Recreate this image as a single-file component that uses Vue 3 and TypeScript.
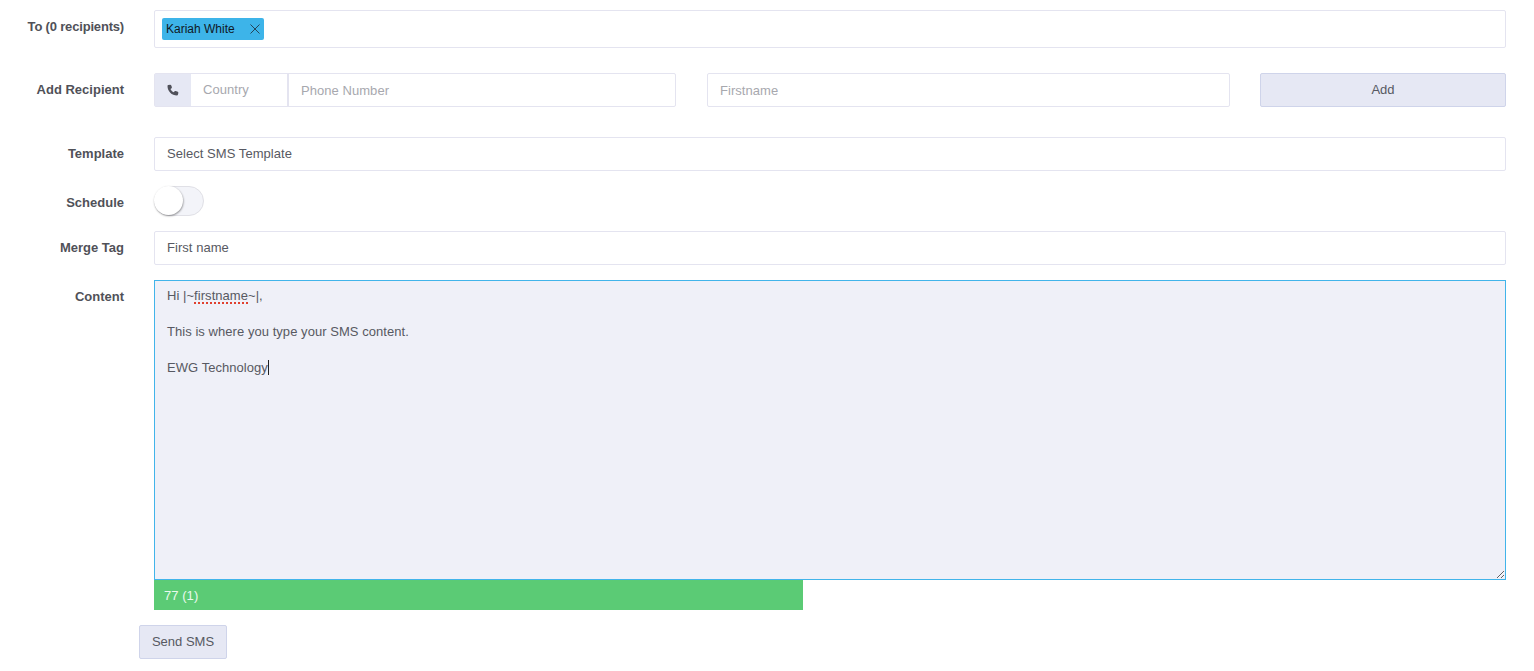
<script setup lang="ts">
const count = 77
const parts = 1
</script>

<template>
  <form class="page" @submit.prevent>
    <div class="row to-row">
      <label class="label to-label">To (0 recipients)</label>
      <div class="field tags">
        <span class="tag">
          <span>Kariah White</span>
          <svg class="tag-x" width="10" height="10" viewBox="0 0 10 10" aria-hidden="true">
            <path d="M.5.5l9 9M9.500.5l-9 9" fill="none" stroke="#1f2a33" stroke-width=".8" />
          </svg>
        </span>
      </div>
    </div>

    <div class="row add-row">
      <label class="label">Add Recipient</label>
      <div class="add-grid">
        <div class="phone-group">
          <span class="addon">
            <svg width="12" height="12" viewBox="0 0 24 24" aria-hidden="true">
              <path fill="#50515a" d="M6.200 1.300 2.400 2.200C1.600 2.400 1 3.100 1 4c0 10.500 8.500 19 19 19 .9 0 1.600-.6 1.800-1.400l.9-3.800c.2-.9-.3-1.800-1.100-2.100l-4.200-1.800c-.7-.3-1.600-.1-2.100.5l-1.800 2.300c-2.900-1.400-5.200-3.700-6.600-6.600l2.300-1.800c.6-.5.8-1.400.5-2.100L8.300 2.400c-.4-.8-1.200-1.300-2.100-1.100Z" />
            </svg>
          </span>
          <span class="country">Country</span>
          <span class="phone">Phone Number</span>
        </div>
        <div class="field single placeholder first">Firstname</div>
        <button class="btn add-btn" type="button">Add</button>
      </div>
    </div>

    <div class="row template-row">
      <label class="label">Template</label>
      <div class="field single">Select SMS Template</div>
    </div>

    <div class="row gap-row schedule-row">
      <label class="label">Schedule</label>
      <span class="toggle"><span class="knob"></span></span>
    </div>

    <div class="row gap-row">
      <label class="label">Merge Tag</label>
      <div class="field single">First name</div>
    </div>

    <div class="row gap-row content-row">
      <label class="label">Content</label>
      <div class="content-col">
        <div class="editor">
          <p>Hi |~<span class="misspelled">firstname</span>~|,</p>
          <p>This is where you type your SMS content.</p>
          <p>EWG Technology<span class="caret"></span></p>
        </div>
        <div class="counter">{{ count }} ({{ parts }})</div>
      </div>
    </div>

    <div class="actions">
      <button class="btn send-btn" type="button">Send SMS</button>
    </div>
  </form>
</template>

<style>
html,
body {
  margin: 0;
  background: #fff;
}
</style>

<style scoped>
.page {
  box-sizing: border-box;
  width: 1534px;
  height: 671px;
  padding: 10px 28px 0 0;
  overflow: hidden;
  font-family: "Liberation Sans", Arial, sans-serif;
  font-size: 13px;
  letter-spacing: 0.05px;
  color: #575962;
}
.row {
  display: flex;
  align-items: flex-start;
  gap: 30px;
}
.label {
  flex: 0 0 124px;
  box-sizing: border-box;
  text-align: right;
  font-weight: 700;
  line-height: 16px;
  padding-top: 9px;
  letter-spacing: 0;
  color: #505158;
}
.to-label {
  letter-spacing: -0.18px;
}
.field {
  flex: 1;
  box-sizing: border-box;
  border: 1px solid #e4e4f0;
  border-radius: 2px;
  background: #fff;
}
.single {
  height: 34px;
  line-height: 32px;
  padding-left: 12px;
}
.tags {
  height: 38px;
  display: flex;
  align-items: center;
  padding-left: 7px;
}
.tag {
  box-sizing: border-box;
  width: 102px;
  height: 22px;
  display: flex;
  align-items: center;
  justify-content: space-between;
  padding: 0 4px;
  border-radius: 2px;
  background: #3db4e9;
  color: #10181f;
  font-size: 12px;
  letter-spacing: 0;
}
.add-row {
  margin-top: 25px;
}
.add-grid {
  flex: 1;
  display: grid;
  grid-template-columns: 522px 523px 246px;
  justify-content: space-between;
}
.phone-group {
  display: flex;
  height: 34px;
  box-sizing: border-box;
  border: 1px solid #e4e4f0;
  border-radius: 2px;
}
.addon {
  flex: 0 0 36px;
  display: flex;
  align-items: center;
  justify-content: center;
  background: #e6e8f4;
  padding-right: 1px;
  box-sizing: border-box;
}
.country {
  flex: 0 0 98px;
  box-sizing: border-box;
  padding-left: 12px;
  line-height: 31px;
  color: #a7a8ae;
  border-right: 2px solid #e4e4f0;
}
.phone {
  flex: 1;
  padding-left: 12px;
  line-height: 33px;
  color: #a7a8ae;
}
.placeholder {
  color: #a7a8ae;
  line-height: 33px;
}
.first {
  padding-left: 12.500px;
}
.btn {
  box-sizing: border-box;
  height: 34px;
  border: 1px solid #cfd4ea;
  border-radius: 2px;
  background: #e6e8f4;
  color: #575962;
  font: inherit;
  padding: 0 0 1px;
}
.template-row {
  margin-top: 30px;
}
.gap-row {
  margin-top: 15px;
}
.toggle {
  display: block;
  position: relative;
  box-sizing: border-box;
  width: 50px;
  height: 30px;
  border: 1px solid #e0e0e6;
  border-radius: 15px;
  background: #f3f4f9;
}
.knob {
  position: absolute;
  left: -1px;
  top: -1px;
  width: 29px;
  height: 29px;
  border-radius: 50%;
  background: #fff;
  box-shadow: 0.5px 1px 2px rgba(0, 0, 0, 0.4);
}
.content-col {
  flex: 1;
}
.editor {
  box-sizing: border-box;
  height: 300px;
  padding: 6px 12px;
  border: 1px solid #41b4ea;
  background: #eff0f8;
  line-height: 18px;
  overflow: auto;
  resize: vertical;
}
.editor p {
  margin: 0 0 18px;
}
.misspelled {
  text-decoration: underline dotted #e0402f 2px;
  text-underline-offset: 2px;
}
.caret {
  display: inline-block;
  width: 1px;
  height: 15px;
  vertical-align: -3px;
  background: #222;
}
.counter {
  width: 649px;
  height: 30px;
  box-sizing: border-box;
  padding-left: 10px;
  line-height: 31px;
  background: #5bcb75;
  color: #e9f9ed;
}
.actions {
  margin-top: 15px;
  padding-left: 139px;
}
.send-btn {
  width: 88px;
}
</style>
